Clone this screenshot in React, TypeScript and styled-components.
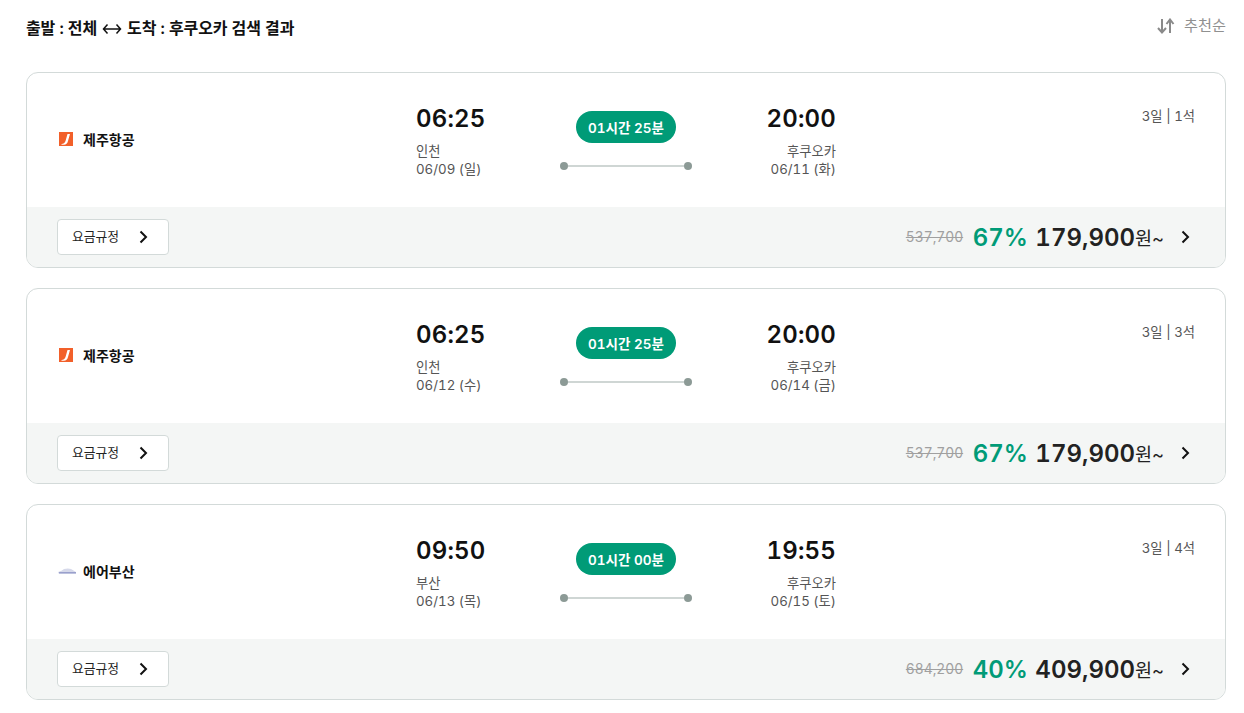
import React from "react";
import styled, { createGlobalStyle } from "styled-components";

const Global = createGlobalStyle`
  html, body { margin: 0; padding: 0; background: #fff; }
  body { font-family: Inter, "Noto Sans CJK KR", sans-serif; color: #111; font-variant-numeric: tabular-nums; }
`;
const Page = styled.div`
  width: 1244px; box-sizing: border-box; padding: 0 18px 0 26px;
`;
const Header = styled.header`
  height: 72px; display: flex; justify-content: space-between; align-items: flex-start;
`;
const Title = styled.h1`
  margin: 18px 0 0; font-size: 16px; line-height: 20px; font-weight: 600; color: #111; letter-spacing: -0.1px;
  display: flex; align-items: center;
`;
const SwapIcon = styled.svg`
  width: 20px; height: 12px; margin: 2px 5px 0 5px;
`;
const Sort = styled.div`
  margin: 16px 0 0; display: flex; align-items: center; gap: 9px; font-size: 15.2px; line-height: 20px; color: #909090;
`;
const List = styled.div`
  display: flex; flex-direction: column; gap: 20px;
`;
const Card = styled.article`
  height: 196px; box-sizing: border-box; border: 1px solid #d3dad9; border-radius: 12px; overflow: hidden;
  display: flex; flex-direction: column;
`;
const Top = styled.div`
  height: 134px; box-sizing: border-box; padding: 0 30px 0 31px; display: flex;
`;
const Airline = styled.div`
  width: 358px; height: 132px; display: flex; align-items: center; font-size: 14px; font-weight: 600; color: #111;
`;
const LogoSlot = styled.span`
  width: 25px; display: flex; align-items: center;
`;
const Route = styled.div`
  width: 420px; height: 134px; display: grid; grid-template-columns: 1fr 132px 1fr;
`;
const Stop = styled.div<{ $end?: boolean }>`
  display: flex; flex-direction: column; padding-top: 30px;
  align-items: ${p => (p.$end ? "flex-end" : "flex-start")};
  text-align: ${p => (p.$end ? "right" : "left")};
`;
const Time = styled.div`
  font-size: 24px; line-height: 32px; font-weight: 600; color: #111; letter-spacing: 0.2px;
`;
const Place = styled.div`
  margin-top: 7px; font-size: 13.3px; line-height: 18px; color: #555;
`;
const Duration = styled.div`
  display: flex; flex-direction: column; align-items: center; padding-top: 38px;
`;
const Pill = styled.div`
  height: 32px; padding: 0 12.5px; border-radius: 16px; background: #009b77; color: #fff;
  display: flex; align-items: center; font-size: 13.5px; font-weight: 600; white-space: nowrap;
`;
const Track = styled.div`
  margin-top: 18px; width: 132px; height: 10px; display: flex; align-items: center;
`;
const Dot = styled.span`
  width: 8px; height: 8px; border-radius: 50%; background: #8c9a96; flex: none;
`;
const Line = styled.span`
  flex: 1; height: 2px; background: #cfd6d4;
`;
const Seats = styled.div`
  flex: 1; text-align: right; padding-top: 33px; font-size: 13.3px; line-height: 20px; color: #555;
`;
const Bottom = styled.div`
  height: 60px; background: #f4f6f5; padding: 0 30px; display: flex; align-items: center; justify-content: space-between; box-sizing: border-box;
`;
const RuleButton = styled.button`
  width: 112px; height: 36px; box-sizing: border-box; border: 1px solid #d3dad9; border-radius: 4px; background: #fff;
  display: flex; align-items: center; padding: 0 16px 3px 14px; justify-content: space-between;
  font: 400 12.8px Inter, "Noto Sans CJK KR", sans-serif; color: #222;
  & > svg { margin-bottom: -3px; }
`;
const Price = styled.div`
  display: flex; align-items: center;
`;
const OldPrice = styled.s`
  font-size: 13.8px; color: #a0a0a0; margin-right: 9.5px;
`;
const Discount = styled.span`
  font-size: 24px; font-weight: 600; color: #009b77; margin-right: 7.5px;
`;
const Amount = styled.span`
  font-size: 24px; font-weight: 600; color: #222;
`;
const Unit = styled.span`
  font-size: 18.5px; color: #222;
`;
const More = styled.span`
  width: 16px; margin: 0 1px 0 14px; display: flex;
`;

const Chevron = ({ size = 16 }: { size?: number }) => (
  <svg width={size} height={size} viewBox="0 0 16 16" fill="none" stroke="#111" strokeWidth="2">
    <path d="M4.5 2.5 L10 8 L4.5 13.5" />
  </svg>
);

const JejuLogo = () => (
  <svg width="15" height="14" viewBox="0 0 15 14">
    <rect x="1" width="14" height="14" fill="#f2602a" />
    <path d="M3.5 12 Q6.5 12 7.5 9 L9.5 2 H12 L10 9 Q9 12.8 6 12.8 L3.5 12.8Z" fill="#fff" />
  </svg>
);
const BusanLogo = () => (
  <svg width="18" height="7" viewBox="0 0 18 7">
    <path d="M0 4 Q4 3 6 1 Q10 0 13 1 L18 4 L18 6 L1 6Z" fill="#d6d9ea" />
    <rect x="1" y="4" width="17" height="1.4" fill="#9aa0cc" />
  </svg>
);

type Flight = {
  logo: React.ReactNode; airline: string; dep: string; depPlace: string; depDate: string;
  dur: string; arr: string; arrDate: string; seats: string; old: string; pct: string; price: string;
};
const flights: Flight[] = [
  { logo: <JejuLogo />, airline: "제주항공", dep: "06:25", depPlace: "인천", depDate: "06/09 (일)", dur: "01시간 25분", arr: "20:00", arrDate: "06/11 (화)", seats: "3일 | 1석", old: "537,700", pct: "67%", price: "179,900" },
  { logo: <JejuLogo />, airline: "제주항공", dep: "06:25", depPlace: "인천", depDate: "06/12 (수)", dur: "01시간 25분", arr: "20:00", arrDate: "06/14 (금)", seats: "3일 | 3석", old: "537,700", pct: "67%", price: "179,900" },
  { logo: <BusanLogo />, airline: "에어부산", dep: "09:50", depPlace: "부산", depDate: "06/13 (목)", dur: "01시간 00분", arr: "19:55", arrDate: "06/15 (토)", seats: "3일 | 4석", old: "684,200", pct: "40%", price: "409,900" },
];

export default function App() {
  return (
    <Page>
      <Global />
      <Header>
        <Title>
          출발 : 전체
          <SwapIcon viewBox="0 0 20 12" fill="none" stroke="#111" strokeWidth="1.5">
            <path d="M5.5 1.5 L1.5 6 L5.5 10.5 M1.5 6 H18.5 M14.5 1.5 L18.5 6 L14.5 10.5" />
          </SwapIcon>
          도착 : 후쿠오카 검색 결과
        </Title>
        <Sort>
          <svg width="18" height="16" viewBox="0 0 18 16" fill="none" stroke="#8a8a8a" strokeWidth="2">
            <path d="M5 1 V14 M1 10 L5 14.5 L9 10 M13 15 V2 M9.5 6 L13 1.5 L16.5 6" />
          </svg>
          추천순
        </Sort>
      </Header>
      <List>
        {flights.map((f, i) => (
          <Card key={i}>
            <Top>
              <Airline>
                <LogoSlot>{f.logo}</LogoSlot>
                {f.airline}
              </Airline>
              <Route>
                <Stop>
                  <Time>{f.dep}</Time>
                  <Place>{f.depPlace}<br />{f.depDate}</Place>
                </Stop>
                <Duration>
                  <Pill>{f.dur}</Pill>
                  <Track><Dot /><Line /><Dot /></Track>
                </Duration>
                <Stop $end>
                  <Time>{f.arr}</Time>
                  <Place>{"후쿠오카"}<br />{f.arrDate}</Place>
                </Stop>
              </Route>
              <Seats>{f.seats}</Seats>
            </Top>
            <Bottom>
              <RuleButton>요금규정<Chevron /></RuleButton>
              <Price>
                <OldPrice>{f.old}</OldPrice>
                <Discount>{f.pct}</Discount>
                <Amount>{f.price}</Amount>
                <Unit>원~</Unit>
                <More><Chevron /></More>
              </Price>
            </Bottom>
          </Card>
        ))}
      </List>
    </Page>
  );
}
